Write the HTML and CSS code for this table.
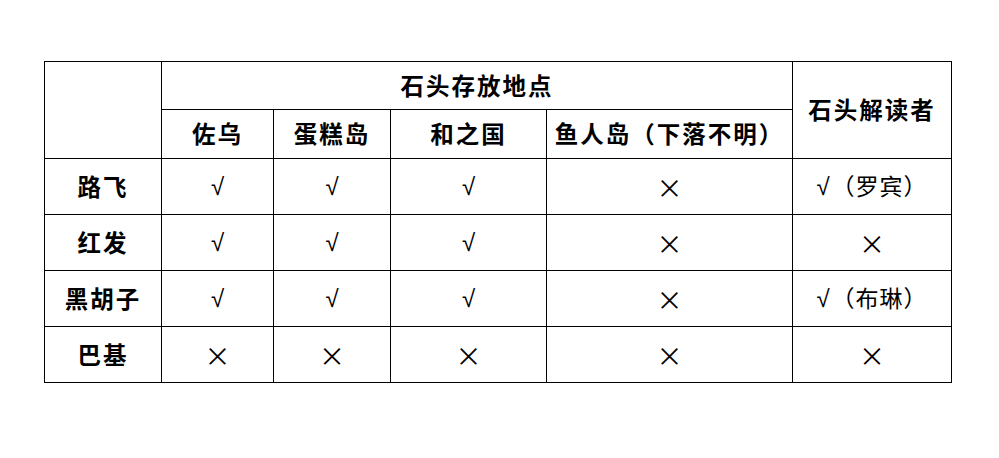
FILE: index.html
```html
<!DOCTYPE html>
<html lang="zh">
<head>
<meta charset="utf-8">
<link rel="stylesheet" href="styles.css">
</head>
<body>
<table class="grid">
  <colgroup>
    <col class="c1"><col class="c2"><col class="c3"><col class="c4"><col class="c5"><col class="c6">
  </colgroup>
  <thead>
    <tr class="h1">
      <th rowspan="2"></th>
      <th colspan="4">石头存放地点</th>
      <th rowspan="2">石头解读者</th>
    </tr>
    <tr class="h2">
      <th>佐乌</th>
      <th>蛋糕岛</th>
      <th>和之国</th>
      <th>鱼人岛（下落不明）</th>
    </tr>
  </thead>
  <tbody>
    <tr>
      <th>路飞</th>
      <td><span class="ok">√</span></td><td><span class="ok">√</span></td><td><span class="ok">√</span></td><td><span class="no">×</span></td>
      <td><span class="ok">√</span><span class="note">（罗宾）</span></td>
    </tr>
    <tr>
      <th>红发</th>
      <td><span class="ok">√</span></td><td><span class="ok">√</span></td><td><span class="ok">√</span></td><td><span class="no">×</span></td>
      <td><span class="no">×</span></td>
    </tr>
    <tr>
      <th>黑胡子</th>
      <td><span class="ok">√</span></td><td><span class="ok">√</span></td><td><span class="ok">√</span></td><td><span class="no">×</span></td>
      <td><span class="ok">√</span><span class="note">（布琳）</span></td>
    </tr>
    <tr>
      <th>巴基</th>
      <td><span class="no">×</span></td><td><span class="no">×</span></td><td><span class="no">×</span></td><td><span class="no">×</span></td>
      <td><span class="no">×</span></td>
    </tr>
  </tbody>
</table>
</body>
</html>
```
FILE: styles.css
```css
html, body {
  margin: 0;
  padding: 0;
  background: #fff;
}
body {
  font-family: "Noto Sans CJK SC", "Noto Sans", sans-serif;
  color: #000;
}
.grid {
  margin: 61px 0 0 44px;
  border-collapse: collapse;
  table-layout: fixed;
  width: 908px;
}
.c1 { width: 117px; }
.c2 { width: 112px; }
.c3 { width: 117px; }
.c4 { width: 156px; }
.c5 { width: 246px; }
.c6 { width: 159px; }
.grid th, .grid td {
  border: 1px solid #000;
  padding: 0;
  text-align: center;
  vertical-align: middle;
  line-height: 1;
}
.grid th {
  font-weight: bold;
  font-size: 23.5px;
  letter-spacing: 2px;
}
.h1 { height: 48px; }
.h2 { height: 49px; }
tbody tr { height: 56px; }
.ok {
  font-size: 24px;
  font-family: "Liberation Sans", sans-serif;
}
.no {
  font-size: 26px;
  font-family: "Noto Sans CJK SC", sans-serif;
}
.note {
  font-size: 23px;
  letter-spacing: 1px;
  margin-left: 2px;
}
```
